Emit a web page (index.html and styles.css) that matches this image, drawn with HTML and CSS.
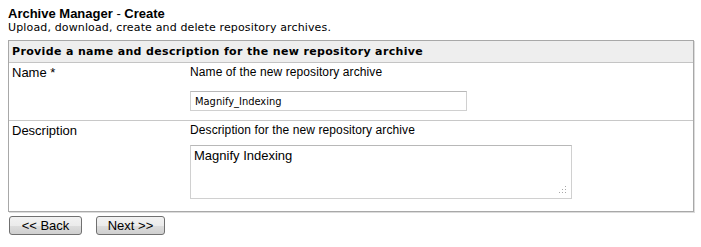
FILE: index.html
```html
<!DOCTYPE html>
<html lang="en">
<head>
    <meta charset="UTF-8">
    <title>Archive Manager - Create</title>
    <link rel="stylesheet" href="styles.css">
</head>
<body>
    <div class="page">
        <h1 class="title">Archive Manager <span class="sep">-</span> Create</h1>
        <p class="subtitle">Upload, download, create and delete repository archives.</p>

        <div class="panel">
            <div class="panel-head">Provide a name and description for the new repository archive</div>

            <div class="row">
                <div class="label">Name *</div>
                <div class="field">
                    <div class="hint">Name of the new repository archive</div>
                    <input type="text" class="text-input" value="Magnify_Indexing">
                </div>
            </div>

            <div class="row row-last">
                <div class="label">Description</div>
                <div class="field">
                    <div class="hint">Description for the new repository archive</div>
                    <div class="area-wrap">
                        <textarea class="text-area">Magnify Indexing</textarea>
                        <svg class="grip" width="8" height="8" viewBox="0 0 8 8">
                            <rect x="6" y="0" width="1" height="1" fill="#a8a8a8"/>
                            <rect x="6" y="3" width="1" height="1" fill="#a8a8a8"/>
                            <rect x="3" y="3" width="1" height="1" fill="#a8a8a8"/>
                            <rect x="6" y="6" width="1" height="1" fill="#a8a8a8"/>
                            <rect x="3" y="6" width="1" height="1" fill="#a8a8a8"/>
                            <rect x="0" y="6" width="1" height="1" fill="#a8a8a8"/>
                        </svg>
                    </div>
                </div>
            </div>
        </div>

        <div class="actions">
            <button class="btn btn-back">&lt;&lt; Back</button>
            <button class="btn btn-next">Next &gt;&gt;</button>
        </div>
    </div>
</body>
</html>
```

FILE: styles.css
```css
* {
    margin: 0;
    padding: 0;
    box-sizing: border-box;
}

body {
    background-color: #ffffff;
    color: #000000;
    font-family: "Liberation Sans", Arial, sans-serif;
    font-size: 12px;
}

.page {
    padding: 6px 7px 0 8px;
}

.title {
    font-size: 13px;
    font-weight: bold;
    line-height: 15px;
    color: #000;
}

.title .sep {
    font-weight: normal;
}

.subtitle {
    font-family: Verdana, "DejaVu Sans", sans-serif;
    font-size: 11px;
    line-height: 13px;
    letter-spacing: 0.14px;
    color: #000;
    margin-bottom: 6px;
}

.panel {
    width: 686px;
    border: 1px solid #a8a8a8;
    box-shadow: 1px 1px 0 #dcdcdc;
}

.panel-head {
    background-color: #eeeeee;
    border-bottom: 1px solid #c4c4c4;
    font-family: Verdana, "DejaVu Sans", sans-serif;
    font-size: 11px;
    font-weight: bold;
    letter-spacing: 0.35px;
    line-height: 21px;
    padding-left: 3px;
}

.row {
    display: grid;
    grid-template-columns: 181px 1fr;
    border-bottom: 1px solid #c8c8c8;
    padding: 2px 0 9px;
}

.row-last {
    border-bottom: none;
    padding-bottom: 12px;
}

.label {
    padding-left: 3px;
    font-size: 13px;
    line-height: 15px;
}

.hint {
    line-height: 15px;
    letter-spacing: 0.1px;
}

.text-input {
    display: block;
    margin-top: 11px;
    width: 277px;
    height: 20px;
    border: 1px solid #d0d0d0;
    border-top-color: #b8b8b8;
    padding: 0 4px;
    font-family: "DejaVu Sans Condensed", "DejaVu Sans", sans-serif;
    font-size: 11px;
    color: #000;
    outline: none;
}

.area-wrap {
    position: relative;
    width: 382px;
    margin-top: 7px;
}

.text-area {
    display: block;
    width: 382px;
    height: 54px;
    border: 1px solid #d0d0d0;
    border-top-color: #b8b8b8;
    padding: 2px 3px;
    font-family: "Liberation Sans", Arial, sans-serif;
    font-size: 13px;
    line-height: 15px;
    color: #000;
    resize: none;
    outline: none;
}

.grip {
    position: absolute;
    right: 5px;
    bottom: 5px;
}

.actions {
    display: flex;
    gap: 14px;
    padding-top: 4px;
    padding-left: 1px;
}

.btn {
    height: 19px;
    border: 1px solid #707070;
    border-radius: 3px;
    background: linear-gradient(#f2f2f2 0%, #ebebeb 50%, #dddddd 51%, #cfcfcf 100%);
    font-family: "Liberation Sans", Arial, sans-serif;
    font-size: 13px;
    line-height: 17px;
    color: #000;
    cursor: pointer;
}

.btn-back {
    width: 73px;
}

.btn-next {
    width: 69px;
}
```
